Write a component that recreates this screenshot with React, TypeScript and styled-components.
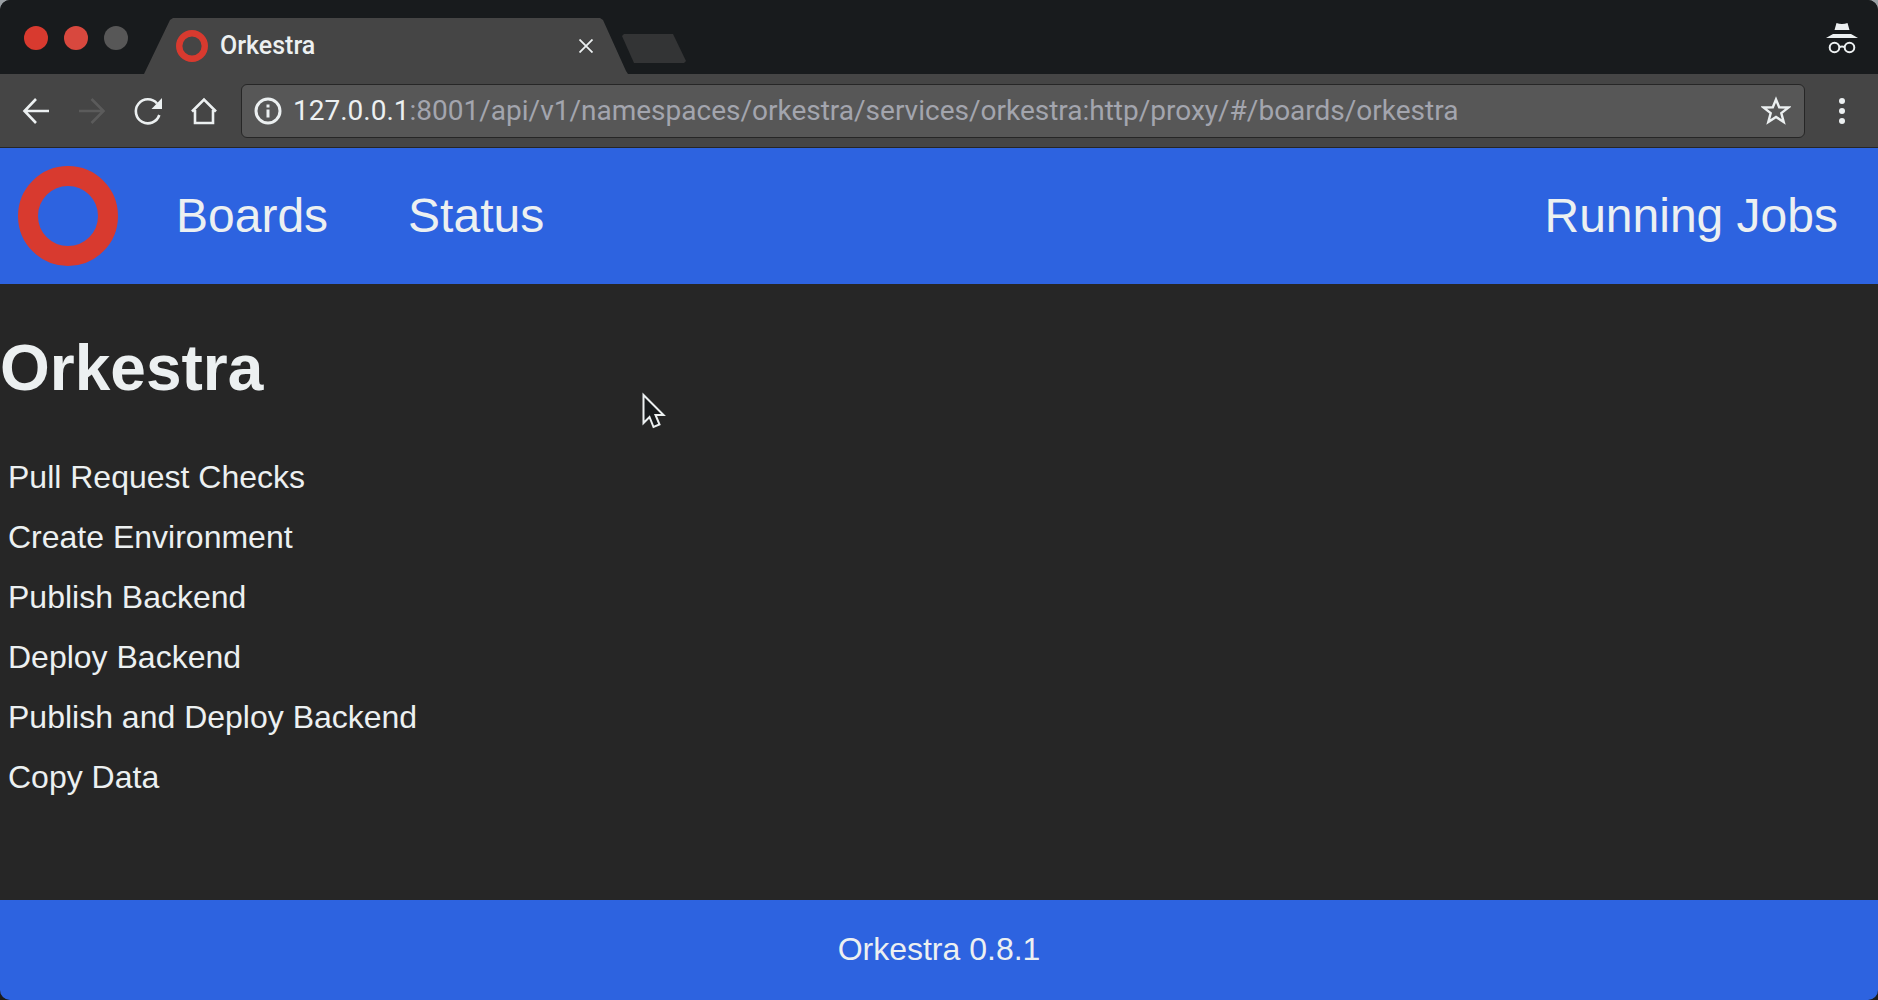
import React from "react";
import styled, { createGlobalStyle } from "styled-components";

const color = {
  strip: "#181b1d",
  chrome: "#454545",
  field: "#575757",
  edge: "#262626",
  page: "#262626",
  blue: "#2d63e0",
  red: "#d83a2f",
  text: "#ecf0f1",
  muted: "#a3a5ae",
};

const chromeFont = `Roboto, "Noto Sans", sans-serif`;
const pageFont = `"Liberation Sans", Arial, sans-serif`;

const GlobalStyle = createGlobalStyle`
  * { box-sizing: border-box; }
  body { margin: 0; background: linear-gradient(#9aa0a4, #1c1c1c); }
  button { border: 0; padding: 0; background: none; color: inherit; font: inherit; }
  a { color: inherit; text-decoration: none; }
  svg { display: block; }
`;

const Window = styled.div`
  display: flex;
  flex-direction: column;
  min-height: 100vh;
  border-radius: 10px;
  overflow: hidden;
  background: ${color.page};
  color: ${color.text};
  font-family: ${pageFont};
`;

const TabStrip = styled.div`
  display: flex;
  align-items: flex-start;
  height: 74px;
  padding: 0 20px 0 24px;
  background: ${color.strip};
  font-family: ${chromeFont};
`;

const WindowButtons = styled.div`
  display: flex;
  gap: 16px;
  padding-top: 26px;
`;

const WindowButton = styled.button<{ $fill: string }>`
  width: 24px;
  height: 24px;
  border-radius: 50%;
  background: ${(p) => p.$fill};
`;

const Tab = styled.div`
  display: flex;
  align-items: center;
  width: 484px;
  height: 56px;
  margin: 18px 0 0 16px;
  padding: 0 35px 0 32px;
  background: ${color.chrome};
  clip-path: polygon(0 100%, 26px 2px, 29px 0, 456px 0, 459px 2px, 482px 53px, 484px 100%);
`;

const TabTitle = styled.span`
  flex: 1;
  margin-left: 12px;
  font-size: 25px;
  font-weight: 500;
  line-height: 32px;
`;

const NewTab = styled.button`
  width: 64px;
  height: 29px;
  margin-top: 34px;
  margin-left: -6px;
  background: #333435;
  clip-path: polygon(0 2px, 2px 0, 51px 0, 64px 27px, 62px 100%, 12px 100%);
`;

const Incognito = styled.div`
  margin: 22px 0 0 auto;
`;

const Toolbar = styled.div`
  display: flex;
  align-items: center;
  height: 74px;
  padding: 0 20px;
  border-bottom: 1px solid ${color.edge};
  background: ${color.chrome};
  font-family: ${chromeFont};
`;

const ToolButtons = styled.div`
  display: flex;
  gap: 24px;
`;

const ToolButton = styled.button`
  width: 32px;
  height: 32px;
`;

const AddressBar = styled.div`
  display: flex;
  flex: 1;
  align-items: center;
  height: 54px;
  margin: 0 21px;
  padding: 0 13px 0 12px;
  border: 1px solid ${color.edge};
  border-radius: 6px;
  background: ${color.field};
  font-size: 28px;
  line-height: 36px;
`;

const Host = styled.label`
  margin-left: 11px;
`;

const Path = styled.input`
  flex: 1;
  min-width: 0;
  padding: 0;
  border: 0;
  outline: 0;
  background: none;
  color: ${color.muted};
  font: inherit;
`;

const Nav = styled.nav`
  display: flex;
  align-items: center;
  gap: 80px;
  height: 136px;
  padding: 0 40px 0 18px;
  background: ${color.blue};
  font-size: 48px;
  line-height: 56px;
`;

const NavStart = styled.div`
  display: flex;
  flex: 1;
  align-items: center;
  gap: 80px;
`;

const HomeLink = styled.a`
  margin-right: -22px;
`;

const Board = styled.main`
  flex: 1;
`;

const BoardTitle = styled.h1`
  margin: 48px 0;
  font-size: 64px;
  line-height: 72px;
`;

const Jobs = styled.ul`
  margin: 0;
  padding: 0;
  list-style: none;
`;

const Job = styled.li`
  padding: 8px;
  margin-bottom: 10px;
  font-size: 32px;
  line-height: 34px;
`;

const Footer = styled.footer`
  min-height: 100px;
  padding: 32px;
  background: ${color.blue};
  font-size: 32px;
  line-height: 34px;
  text-align: center;
`;

const Pointer = styled.svg`
  position: absolute;
  left: 639px;
  top: 389px;
`;

function Ring({ size }: { size: number }) {
  return (
    <svg width={size} height={size} viewBox="0 0 100 100" aria-hidden="true">
      <circle cx="50" cy="50" r="40" fill="none" stroke={color.red} strokeWidth="20" />
    </svg>
  );
}

function Icon({ d, stroke = color.text, solid }: { d: string; stroke?: string; solid?: string }) {
  return (
    <svg width="32" height="32" viewBox="0 0 32 32" fill="none" stroke={stroke} strokeWidth="2.6" aria-hidden="true">
      <path d={d} />
      {solid && <path d={solid} fill={stroke} stroke="none" />}
    </svg>
  );
}

const jobs = [
  "Pull Request Checks",
  "Create Environment",
  "Publish Backend",
  "Deploy Backend",
  "Publish and Deploy Backend",
  "Copy Data",
];

export default function App() {
  return (
    <Window>
      <GlobalStyle />
      <TabStrip>
        <WindowButtons>
          <WindowButton $fill={color.red} aria-label="Close window" />
          <WindowButton $fill="#d8483e" aria-label="Minimise window" />
          <WindowButton $fill="#575757" aria-label="Zoom window" />
        </WindowButtons>
        <Tab>
          <Ring size={32} />
          <TabTitle>Orkestra</TabTitle>
          <button aria-label="Close tab">
            <svg width="14" height="14" viewBox="0 0 14 14" stroke={color.text} strokeWidth="1.8" aria-hidden="true">
              <path d="M0.500 0.500L13.500 13.500M13.500 0.500L0.500 13.500" />
            </svg>
          </button>
        </Tab>
        <NewTab aria-label="New tab" />
        <Incognito>
          <svg width="32" height="32" viewBox="0 0 32 32" fill={color.text} aria-hidden="true">
            <path d="M10.500 1Q13 2 16 2T21.500 1L23.500 8H8.500ZM7 12H25L32 16H0Z" />
            <g fill="none" stroke={color.text} strokeWidth="2">
              <circle cx="8.500" cy="25.500" r="4.800" />
              <circle cx="23.500" cy="25.500" r="4.800" />
              <path d="M13.300 25q2.700-1 5.400 0" />
            </g>
          </svg>
        </Incognito>
      </TabStrip>
      <Toolbar>
        <ToolButtons>
          <ToolButton aria-label="Back">
            <Icon d="M29 16H5M16 4L4.500 16L16 28" />
          </ToolButton>
          <ToolButton aria-label="Forward">
            <Icon stroke="#5b5b5b" d="M3 16H27M15.500 4L27.500 16L15.500 28" />
          </ToolButton>
          <ToolButton aria-label="Reload">
            <Icon d="M27.300 20A12 12 0 1 1 25 8.500" solid="M30 3V14H19.500Z" />
          </ToolButton>
          <ToolButton aria-label="Home">
            <Icon d="M7 15V28H25V15M4 16.500L16 4.500L28 16.500" />
          </ToolButton>
        </ToolButtons>
        <AddressBar>
          <svg width="28" height="28" viewBox="0 0 28 28" fill="none" stroke={color.text} strokeWidth="3" aria-hidden="true">
            <circle cx="14" cy="14" r="12" />
            <path d="M14 12.500V20.500M14 7.500V10.500" />
          </svg>
          <Host htmlFor="address">127.0.0.1</Host>
          <Path
            id="address"
            type="text"
            spellCheck={false}
            defaultValue=":8001/api/v1/namespaces/orkestra/services/orkestra:http/proxy/#/boards/orkestra"
          />
          <button aria-label="Bookmark this page">
            <svg width="30" height="30" viewBox="0 0 30 30" fill="none" stroke={color.text} strokeWidth="2.4" aria-hidden="true">
              <path d="M15 3.500L18.200 11.300L27.500 11.500L20.300 17.100L22.700 26L15 20.900L7.300 26L9.700 17.100L2.500 11.500L11.800 11.300Z" />
            </svg>
          </button>
        </AddressBar>
        <ToolButton aria-label="Menu">
          <svg width="32" height="32" viewBox="0 0 32 32" fill={color.text} aria-hidden="true">
            <circle cx="16" cy="6" r="3" />
            <circle cx="16" cy="16" r="3" />
            <circle cx="16" cy="26" r="3" />
          </svg>
        </ToolButton>
      </Toolbar>
      <Nav>
        <NavStart>
          <HomeLink href="#/" aria-label="Home">
            <Ring size={100} />
          </HomeLink>
          <a href="#/boards">Boards</a>
          <a href="#/status">Status</a>
        </NavStart>
        <a href="#/jobs">Running Jobs</a>
      </Nav>
      <Board>
        <BoardTitle>Orkestra</BoardTitle>
        <Jobs>
          {jobs.map((job) => (
            <Job key={job}>
              <a href="#/boards/orkestra">{job}</a>
            </Job>
          ))}
        </Jobs>
      </Board>
      <Footer>Orkestra 0.8.1</Footer>
      <Pointer width="30" height="42" viewBox="0 0 30 42" aria-hidden="true">
        <path
          d="M4.500 6V34L10.500 28L14.500 38L20.500 35.500L16.500 26H24.500Z"
          fill={color.strip}
          stroke={color.text}
          strokeWidth="2"
        />
      </Pointer>
    </Window>
  );
}
